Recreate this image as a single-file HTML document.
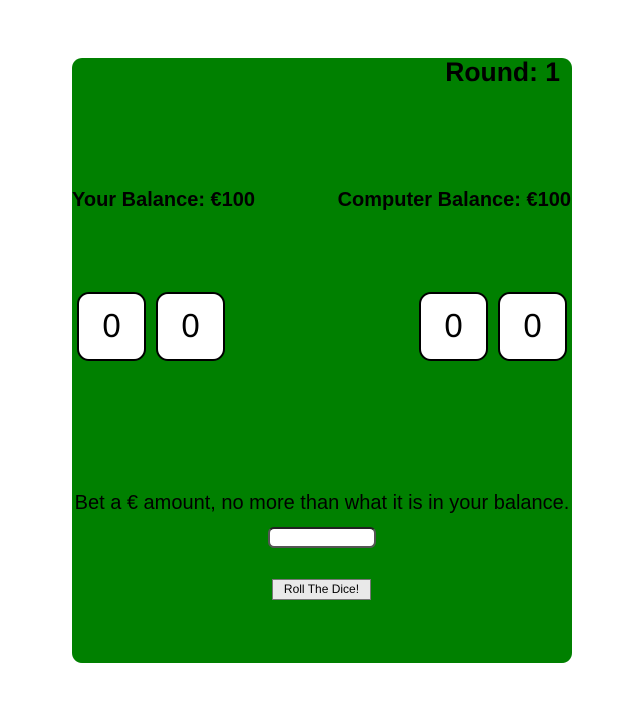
<!DOCTYPE html>
<html><head><style>
body{margin:0;background:#fff;font-family:"Liberation Sans",Arial,sans-serif;}
.card{position:absolute;left:72px;top:58px;width:500px;height:605px;background:#008000;border-radius:10px;}
.abs{position:absolute;white-space:nowrap;}
.die{position:absolute;top:292px;width:65px;height:65px;background:#fff;border:2px solid #000;border-radius:12px;font-size:33px;text-align:center;line-height:63px;color:#000;}
</style></head><body>
<div class="card"></div>
<div class="abs" style="right:80px;top:57px;font-size:26.5px;font-weight:bold;">Round: 1</div>
<div class="abs" style="left:72px;top:189px;font-size:20px;font-weight:bold;">Your Balance: €100</div>
<div class="abs" style="right:69px;top:189px;font-size:20px;font-weight:bold;">Computer Balance: €100</div>
<div class="die" style="left:77px">0</div>
<div class="die" style="left:156px">0</div>
<div class="die" style="left:419px">0</div>
<div class="die" style="left:498px">0</div>
<div class="abs" style="left:72px;width:500px;text-align:center;top:492px;font-size:20px;">Bet a € amount, no more than what it is in your balance.</div>
<div class="abs" style="left:268px;top:527px;width:104px;height:17px;background:#fff;border:2px solid #555;border-top-color:#222;border-radius:6px;"></div>
<div class="abs" style="left:272px;top:579px;width:97px;height:19px;background:#e9e9e9;border:1px solid #777;font-size:12px;text-align:center;line-height:19px;">Roll The Dice!</div>
</body></html>
